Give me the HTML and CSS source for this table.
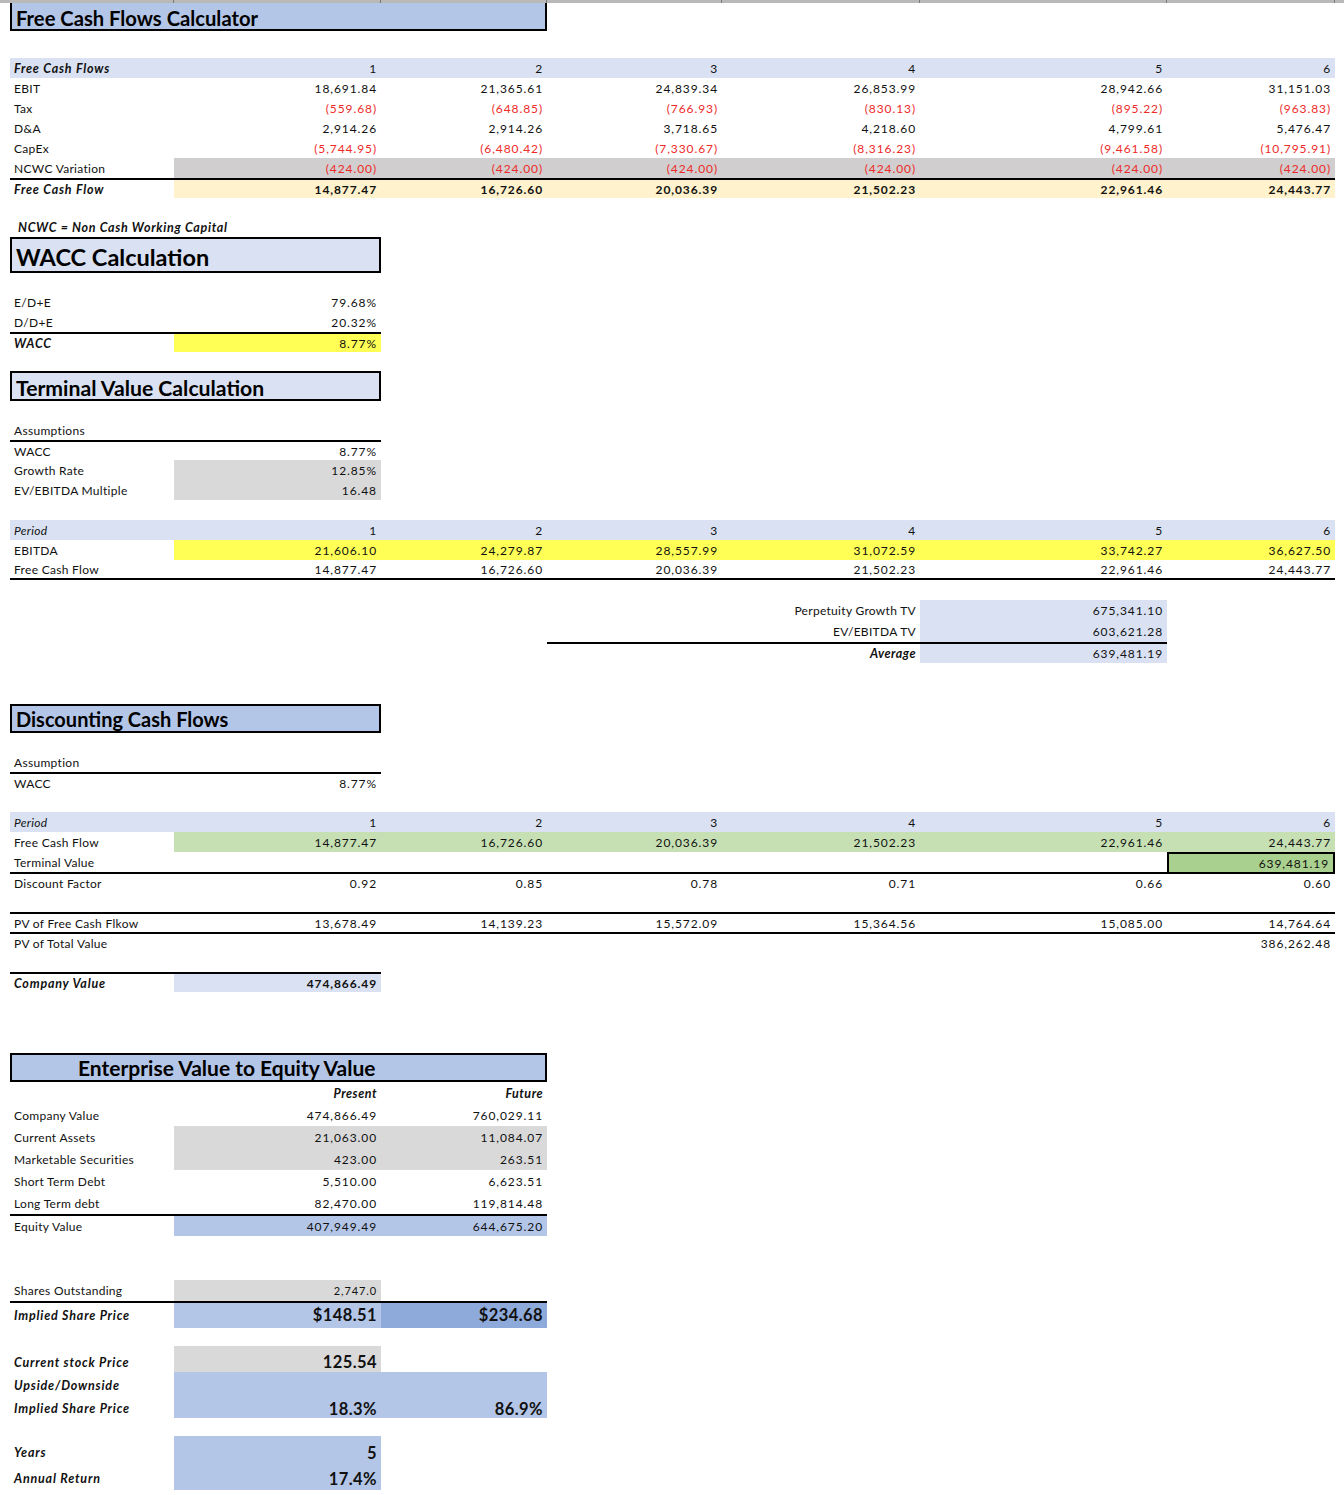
FILE: index.html
```html
<!DOCTYPE html>
<html>
<head>
<meta charset="utf-8">
<title>Free Cash Flows Calculator</title>
<link rel="stylesheet" href="styles.css">
</head>
<body>
<div class="topbar">
  <span class="tb w-a"></span><span class="tb w-b"></span><span class="tb w-c"></span><span class="tb w-d"></span><span class="tb w-e"></span><span class="tb w-f"></span><span class="tb w-g"></span><span class="tb w-rest"></span>
</div>
<div class="sheet">

  <div class="title t-fcf">Free Cash Flows Calculator</div>

  <div class="block fcf">
    <div class="r lb"><div class="c l bi">Free Cash Flows</div><div class="c n">1</div><div class="c n">2</div><div class="c n">3</div><div class="c n">4</div><div class="c n">5</div><div class="c n">6</div></div>
    <div class="r"><div class="c l">EBIT</div><div class="c n">18,691.84</div><div class="c n">21,365.61</div><div class="c n">24,839.34</div><div class="c n">26,853.99</div><div class="c n">28,942.66</div><div class="c n">31,151.03</div></div>
    <div class="r red"><div class="c l">Tax</div><div class="c n">(559.68)</div><div class="c n">(648.85)</div><div class="c n">(766.93)</div><div class="c n">(830.13)</div><div class="c n">(895.22)</div><div class="c n">(963.83)</div></div>
    <div class="r"><div class="c l">D&amp;A</div><div class="c n">2,914.26</div><div class="c n">2,914.26</div><div class="c n">3,718.65</div><div class="c n">4,218.60</div><div class="c n">4,799.61</div><div class="c n">5,476.47</div></div>
    <div class="r red"><div class="c l">CapEx</div><div class="c n">(5,744.95)</div><div class="c n">(6,480.42)</div><div class="c n">(7,330.67)</div><div class="c n">(8,316.23)</div><div class="c n">(9,461.58)</div><div class="c n">(10,795.91)</div></div>
    <div class="r red"><div class="c l">NCWC Variation</div><div class="c n gr2">(424.00)</div><div class="c n gr2">(424.00)</div><div class="c n gr2">(424.00)</div><div class="c n gr2">(424.00)</div><div class="c n gr2">(424.00)</div><div class="c n gr2">(424.00)</div></div>
    <div class="r rt bold"><div class="c l bi">Free Cash Flow</div><div class="c n cream">14,877.47</div><div class="c n cream">16,726.60</div><div class="c n cream">20,036.39</div><div class="c n cream">21,502.23</div><div class="c n cream">22,961.46</div><div class="c n cream">24,443.77</div></div>
  </div>

  <div class="note">NCWC = Non Cash Working Capital</div>
  <div class="title t-wacc">WACC Calculation</div>

  <div class="block wacc">
    <div class="r"><div class="c l">E/D+E</div><div class="c n">79.68%</div></div>
    <div class="r"><div class="c l">D/D+E</div><div class="c n">20.32%</div></div>
    <div class="r"><div class="c l bi b">WACC</div><div class="c n b yel">8.77%</div></div>
  </div>

  <div class="title t-tv">Terminal Value Calculation</div>

  <div class="block assum">
    <div class="r"><div class="c l">Assumptions</div></div>
    <div class="r"><div class="c l b">WACC</div><div class="c n b">8.77%</div></div>
    <div class="r"><div class="c l">Growth Rate</div><div class="c n gr">12.85%</div></div>
    <div class="r"><div class="c l">EV/EBITDA Multiple</div><div class="c n gr">16.48</div></div>
  </div>

  <div class="block period">
    <div class="r lb"><div class="c l it">Period</div><div class="c n">1</div><div class="c n">2</div><div class="c n">3</div><div class="c n">4</div><div class="c n">5</div><div class="c n">6</div></div>
    <div class="r"><div class="c l">EBITDA</div><div class="c n yel">21,606.10</div><div class="c n yel">24,279.87</div><div class="c n yel">28,557.99</div><div class="c n yel">31,072.59</div><div class="c n yel">33,742.27</div><div class="c n yel">36,627.50</div></div>
    <div class="r rbb"><div class="c l">Free Cash Flow</div><div class="c n">14,877.47</div><div class="c n">16,726.60</div><div class="c n">20,036.39</div><div class="c n">21,502.23</div><div class="c n">22,961.46</div><div class="c n">24,443.77</div></div>
  </div>

  <div class="block tvals">
    <div class="r r21"><div class="c"></div><div class="c"></div><div class="c"></div><div class="c"></div><div class="c n lab">Perpetuity Growth TV</div><div class="c n lblue">675,341.10</div></div>
    <div class="r r21"><div class="c"></div><div class="c"></div><div class="c"></div><div class="c"></div><div class="c n lab">EV/EBITDA TV</div><div class="c n lblue">603,621.28</div></div>
    <div class="r r21"><div class="c"></div><div class="c"></div><div class="c"></div><div class="c b"></div><div class="c n b bi">Average</div><div class="c n b lblue">639,481.19</div></div>
  </div>

  <div class="title t-dcf">Discounting Cash Flows</div>

  <div class="block assum2">
    <div class="r"><div class="c l">Assumption</div></div>
    <div class="r"><div class="c l b">WACC</div><div class="c n b">8.77%</div></div>
  </div>

  <div class="block disc">
    <div class="r lb"><div class="c l it">Period</div><div class="c n">1</div><div class="c n">2</div><div class="c n">3</div><div class="c n">4</div><div class="c n">5</div><div class="c n">6</div></div>
    <div class="r"><div class="c l">Free Cash Flow</div><div class="c n grn">14,877.47</div><div class="c n grn">16,726.60</div><div class="c n grn">20,036.39</div><div class="c n grn">21,502.23</div><div class="c n grn">22,961.46</div><div class="c n grn">24,443.77</div></div>
    <div class="r"><div class="c l">Terminal Value</div><div class="c"></div><div class="c"></div><div class="c"></div><div class="c"></div><div class="c"></div><div class="c n tvcell">639,481.19</div></div>
    <div class="r rt"><div class="c l">Discount Factor</div><div class="c n">0.92</div><div class="c n">0.85</div><div class="c n">0.78</div><div class="c n">0.71</div><div class="c n">0.66</div><div class="c n">0.60</div></div>
    <div class="r"><div class="c"></div></div>
    <div class="r rt"><div class="c l">PV of Free Cash Flkow</div><div class="c n">13,678.49</div><div class="c n">14,139.23</div><div class="c n">15,572.09</div><div class="c n">15,364.56</div><div class="c n">15,085.00</div><div class="c n">14,764.64</div></div>
    <div class="r rt"><div class="c l">PV of Total Value</div><div class="c"></div><div class="c"></div><div class="c"></div><div class="c"></div><div class="c"></div><div class="c n">386,262.48</div></div>
    <div class="r"><div class="c"></div></div>
    <div class="r"><div class="c l bi b">Company Value</div><div class="c n b bold lblue">474,866.49</div></div>
  </div>

  <div class="title t-ev">Enterprise Value to Equity Value</div>

  <div class="block ev">
    <div class="r r22"><div class="c"></div><div class="c n bi">Present</div><div class="c n bi">Future</div></div>
    <div class="r r22"><div class="c l">Company Value</div><div class="c n">474,866.49</div><div class="c n">760,029.11</div></div>
    <div class="r r22"><div class="c l">Current Assets</div><div class="c n gr">21,063.00</div><div class="c n gr">11,084.07</div></div>
    <div class="r r22"><div class="c l">Marketable Securities</div><div class="c n gr">423.00</div><div class="c n gr">263.51</div></div>
    <div class="r r22"><div class="c l">Short Term Debt</div><div class="c n">5,510.00</div><div class="c n">6,623.51</div></div>
    <div class="r r22"><div class="c l">Long Term debt</div><div class="c n">82,470.00</div><div class="c n">119,814.48</div></div>
    <div class="r r22 rt"><div class="c l">Equity Value</div><div class="c n mblue">407,949.49</div><div class="c n mblue">644,675.20</div></div>
  </div>

  <div class="block shares">
    <div class="r r21"><div class="c l">Shares Outstanding</div><div class="c n gr small">2,747.0</div><div class="c"></div></div>
    <div class="r r27 rt"><div class="c l bi">Implied Share Price</div><div class="c n big mblue">$148.51</div><div class="c n big dblue">$234.68</div></div>
  </div>

  <div class="block upside">
    <div class="r r26"><div class="c l bi">Current stock Price</div><div class="c n big gr">125.54</div></div>
    <div class="r r23"><div class="c l bi">Upside/Downside</div><div class="c mblue"></div><div class="c mblue"></div></div>
    <div class="r r23"><div class="c l bi">Implied Share Price</div><div class="c n big mblue">18.3%</div><div class="c n big mblue">86.9%</div></div>
  </div>

  <div class="block years">
    <div class="r r30"><div class="c l bi">Years</div><div class="c n big mblue">5</div></div>
    <div class="r r24"><div class="c l bi">Annual Return</div><div class="c n big mblue">17.4%</div></div>
  </div>

</div>
</body>
</html>
```

FILE: styles.css
```css
html, body {
  margin: 0;
  padding: 0;
  background: #ffffff;
}

body {
  font-family: Lato, "Open Sans", "Liberation Sans", sans-serif;
  font-size: 12px;
  color: #111;
  letter-spacing: 0.3px;
}

.topbar {
  display: flex;
  height: 3px;
  background: #b9b9b9;
}

.tb {
  display: block;
  height: 3px;
  border-right: 1px solid #7a7a7a;
  box-sizing: border-box;
}

.w-a { width: 174px; }
.w-b { width: 207px; }
.w-c { width: 166px; }
.w-d { width: 175px; }
.w-e { width: 198px; }
.w-f { width: 247px; }
.w-g { width: 168px; }
.w-rest { flex: 1; border-right: none; }

.sheet {
  padding-left: 10px;
  width: 1325px;
}

.r {
  display: grid;
  grid-template-columns: 164px 207px 166px 175px 198px 247px 168px;
}

.c {
  box-sizing: border-box;
  height: 20px;
  line-height: 21px;
  padding: 0 4px;
  white-space: nowrap;
}

.r21 .c { height: 21px; line-height: 22px; }
.r22 .c { height: 22px; line-height: 23px; }
.r23 .c { height: 23px; line-height: 22px; padding-top: 3px; }
.r24 .c { height: 24px; line-height: 22px; padding-top: 2px; }
.r26 .c { height: 26px; line-height: 23px; padding-top: 5px; }
.r27 .c { height: 27px; line-height: 25px; }
.r30 .c { height: 30px; line-height: 22px; padding-top: 6px; }

.l { text-align: left; }
.n { text-align: right; letter-spacing: 0.9px; }
.n.lab { letter-spacing: 0.3px; }

.bi { font-weight: 700; font-style: italic; letter-spacing: 0.8px; font-size: 12.5px; }
.n.bi { letter-spacing: 0.5px; }
.it { font-style: italic; }
.bold .c, .bold { font-weight: 700; }

.red .c.n { color: #ee2a2a; }

/* borders */
.rt > .c,
.c.b {
  border-top: 2px solid #000;
  line-height: 19px;
}
.r22.rt > .c { line-height: 21px; }
.r27.rt > .c { line-height: 25px; }

.rbb > .c {
  border-bottom: 2px solid #000;
  line-height: 19px;
}

/* fills */
.lb > .c { background: #d9e1f2; }
.lblue { background: #d9e1f2; }
.mblue { background: #b4c6e7; }
.dblue { background: #8eaadb; }
.gr { background: #d9d9d9; }
.gr2 { background: #d0cece; }
.cream { background: #fff2cc; }
.yel { background: #ffff55; }
.grn { background: #c6e0b4; }

.tvcell {
  background: #a9d08e;
  border: 2px solid #000;
  border-bottom: none;
  line-height: 19px;
}

.small { font-size: 11px; }
.big { font-size: 16.5px; font-weight: 700; letter-spacing: 0.4px; }

/* titles */
.title {
  box-sizing: border-box;
  font-weight: 700;
  color: #000;
  letter-spacing: 0;
  padding-left: 4px;
  border: 2px solid #000;
  white-space: nowrap;
}

.t-fcf {
  width: 537px;
  height: 28px;
  line-height: 30px;
  font-size: 20.2px;
  background: #b4c6e7;
  border-top: none;
}

.t-wacc {
  width: 371px;
  height: 36px;
  line-height: 36px;
  font-size: 23.5px;
  background: #d9e1f2;
}

.t-tv {
  width: 371px;
  height: 30px;
  line-height: 30px;
  font-size: 21.2px;
  background: #d9e1f2;
  margin-top: 19px;
}

.t-dcf {
  width: 371px;
  height: 29px;
  line-height: 27px;
  font-size: 20px;
  background: #b4c6e7;
  margin-top: 41px;
}

.t-ev {
  width: 537px;
  height: 29px;
  line-height: 25px;
  font-size: 21px;
  background: #b4c6e7;
  padding-left: 66px;
  margin-top: 61px;
}

.note {
  margin-top: 20px;
  height: 19px;
  line-height: 20px;
  padding-left: 8px;
  font-weight: 700;
  font-style: italic;
  letter-spacing: 0.7px;
  font-size: 12.5px;
}

/* block spacing */
.fcf { margin-top: 27px; }
.wacc { margin-top: 19px; }
.assum { margin-top: 19px; }
.period { margin-top: 20px; }
.tvals { margin-top: 20px; }
.assum2 { margin-top: 19px; }
.disc { margin-top: 20px; }
.ev { margin-top: 0; }
.shares { margin-top: 44px; }
.upside { margin-top: 18px; }
.years { margin-top: 18px; }
```
